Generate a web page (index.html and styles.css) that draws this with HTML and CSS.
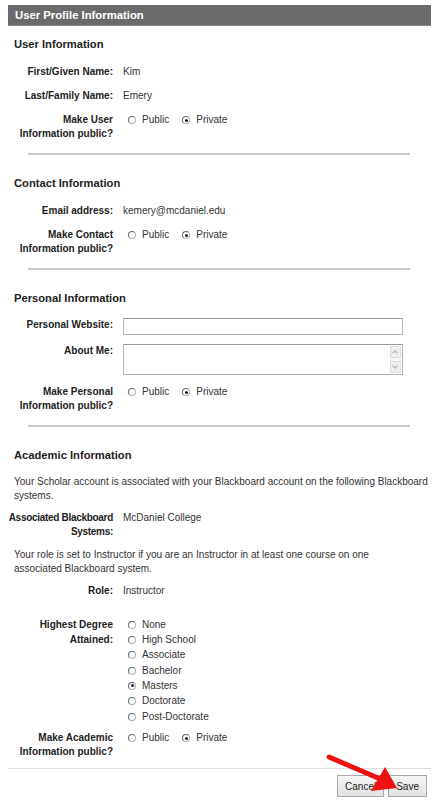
FILE: index.html
```html
<!DOCTYPE html>
<html lang="en">
<head>
  <meta charset="UTF-8" />
  <title>User Profile Information</title>
  <link rel="stylesheet" href="styles.css">
</head>
<body>
  <div class="panel">
    <div class="panel-title">User Profile Information</div>

    <!-- User Information -->
    <h2 class="section-title">User Information</h2>
    <div class="row">
      <div class="label">First/Given Name:</div>
      <div class="value">Kim</div>
    </div>
    <div class="row">
      <div class="label">Last/Family Name:</div>
      <div class="value">Emery</div>
    </div>
    <div class="row">
      <div class="label">Make User<br>Information public?</div>
      <div class="value choice">
        <label><input type="radio" name="pub-user"> Public</label>
        <label><input type="radio" name="pub-user" checked> Private</label>
      </div>
    </div>
    <hr class="sep">

    <!-- Contact Information -->
    <h2 class="section-title">Contact Information</h2>
    <div class="row">
      <div class="label">Email address:</div>
      <div class="value">kemery@mcdaniel.edu</div>
    </div>
    <div class="row">
      <div class="label">Make Contact<br>Information public?</div>
      <div class="value choice">
        <label><input type="radio" name="pub-contact"> Public</label>
        <label><input type="radio" name="pub-contact" checked> Private</label>
      </div>
    </div>
    <hr class="sep">

    <!-- Personal Information -->
    <h2 class="section-title">Personal Information</h2>
    <div class="row field">
      <div class="label">Personal Website:</div>
      <div class="value"><input type="text" class="text-input"></div>
    </div>
    <div class="row field">
      <div class="label">About Me:</div>
      <div class="value">
        <div class="textarea">
          <div class="scroll">
            <span class="arrow up"></span>
            <span class="arrow down"></span>
          </div>
        </div>
      </div>
    </div>
    <div class="row">
      <div class="label">Make Personal<br>Information public?</div>
      <div class="value choice">
        <label><input type="radio" name="pub-personal"> Public</label>
        <label><input type="radio" name="pub-personal" checked> Private</label>
      </div>
    </div>
    <hr class="sep">

    <!-- Academic Information -->
    <h2 class="section-title">Academic Information</h2>
    <p class="note">Your Scholar account is associated with your Blackboard account on the following Blackboard systems.</p>
    <div class="row">
      <div class="label tight">Associated Blackboard<br>Systems:</div>
      <div class="value">McDaniel College</div>
    </div>
    <p class="note">Your role is set to Instructor if you are an Instructor in at least one course on one<br>associated Blackboard system.</p>
    <div class="row">
      <div class="label">Role:</div>
      <div class="value">Instructor</div>
    </div>
    <div class="row degree">
      <div class="label">Highest Degree<br>Attained:</div>
      <div class="value options">
        <label><input type="radio" name="degree"> None</label>
        <label><input type="radio" name="degree"> High School</label>
        <label><input type="radio" name="degree"> Associate</label>
        <label><input type="radio" name="degree"> Bachelor</label>
        <label><input type="radio" name="degree" checked> Masters</label>
        <label><input type="radio" name="degree"> Doctorate</label>
        <label><input type="radio" name="degree"> Post-Doctorate</label>
      </div>
    </div>
    <div class="row">
      <div class="label">Make Academic<br>Information public?</div>
      <div class="value choice">
        <label><input type="radio" name="pub-academic"> Public</label>
        <label><input type="radio" name="pub-academic" checked> Private</label>
      </div>
    </div>

    <div class="actions">
      <button class="btn">Cancel</button>
      <button class="btn">Save</button>
    </div>
  </div>

  <!-- annotation arrow -->
  <svg class="arrow-note" width="438" height="800" viewBox="0 0 438 800">
    <line x1="329" y1="757" x2="378" y2="778" stroke="#ee1111" stroke-width="5" stroke-linecap="round"/>
    <polygon points="397,788 371,791 385,767" fill="#ee1111"/>
  </svg>
</body>
</html>
```

FILE: styles.css
```css
* { box-sizing: border-box; }

body {
  margin: 5px 7px 0 8px;
  font-family: "Liberation Sans", Arial, sans-serif;
  font-size: 10px;
  line-height: 14px;
  color: #333;
  background: #fff;
  position: relative;
}

.panel-title {
  height: 21px;
  padding-left: 7px;
  background: #6a6a6a;
  border-bottom: 1px solid #8a8a8a;
  color: #fff;
  font-weight: bold;
  font-size: 11.3px;
  line-height: 21px;
}

.section-title {
  margin: 10px 0 12px;
  padding-left: 6px;
  font-size: 11.2px;
  line-height: 16px;
  font-weight: bold;
  color: #222;
}

.sep + .section-title { margin-top: 20px; }

.row {
  display: grid;
  grid-template-columns: 105px 1fr;
  column-gap: 10px;
  margin-bottom: 9px;
  padding-top: 1px;
}

.label {
  text-align: right;
  font-weight: bold;
  color: #222;
}

.label.tight { letter-spacing: -0.3px; white-space: nowrap; }

.value { color: #333; }

.choice { display: flex; gap: 8px; }

.choice label,
.options label {
  display: flex;
  align-items: center;
  height: 14px;
}

input[type="radio"] {
  appearance: none;
  width: 8px;
  height: 8px;
  margin: 0 6px 0 5px;
  border: 1px solid #b0b0b0;
  border-top-color: #6a6a6a;
  border-left-color: #6a6a6a;
  border-radius: 50%;
  background: #fff;
  position: relative;
}

input[type="radio"]:checked::after {
  content: '';
  position: absolute;
  top: 1.5px;
  left: 1.5px;
  width: 3px;
  height: 3px;
  border-radius: 50%;
  background: #222;
}

.options label { height: 15.33px; }

.degree { margin-top: 18px; margin-bottom: 6px; }
.degree .label { line-height: 15px; }

.sep {
  height: 2px;
  margin: 12px 21px 0 20px;
  border: 0;
  background: #c8c8c8;
}

.field { padding-top: 0; }
.field .value { line-height: 0; }

.text-input {
  width: 280px;
  height: 17px;
  margin: 0;
  border: 1px solid #b4b4b4;
  border-top-color: #999;
  background: #fff;
  outline: none;
}

.textarea {
  width: 280px;
  height: 31px;
  border: 1px solid #b4b4b4;
  border-top-color: #999;
  display: flex;
  justify-content: flex-end;
  padding: 1px;
}

.scroll {
  width: 11px;
  display: flex;
  flex-direction: column;
  justify-content: space-between;
  background: #f6f6f6;
}

.arrow {
  height: 12px;
  background: #eef0ee;
  border: 1px solid #dcdcdc;
  position: relative;
}

.arrow::after {
  content: '';
  position: absolute;
  left: 2px;
  width: 3px;
  height: 3px;
  border-left: 1px solid #aab;
  border-top: 1px solid #aab;
}

.arrow.up::after { top: 4px; transform: rotate(45deg); }
.arrow.down::after { top: 2px; transform: rotate(225deg); }

.note {
  margin: 12px 0 7px;
  padding-left: 6px;
}

.row + .note { margin-top: 7px; margin-bottom: 7px; }

.actions {
  display: flex;
  justify-content: flex-end;
  gap: 4px;
  margin-top: 6px;
  padding: 6px 4px 0 0;
  border-top: 1px solid #dedede;
}

.btn {
  height: 22px;
  padding: 0 7px;
  font-family: inherit;
  font-size: 10px;
  color: #222;
  background: linear-gradient(#f6f6f6, #e2e2e2);
  border: 1px solid #a8a8a8;
  border-radius: 0;
}

.arrow-note {
  position: absolute;
  top: -5px;
  left: -8px;
  pointer-events: none;
}
```
